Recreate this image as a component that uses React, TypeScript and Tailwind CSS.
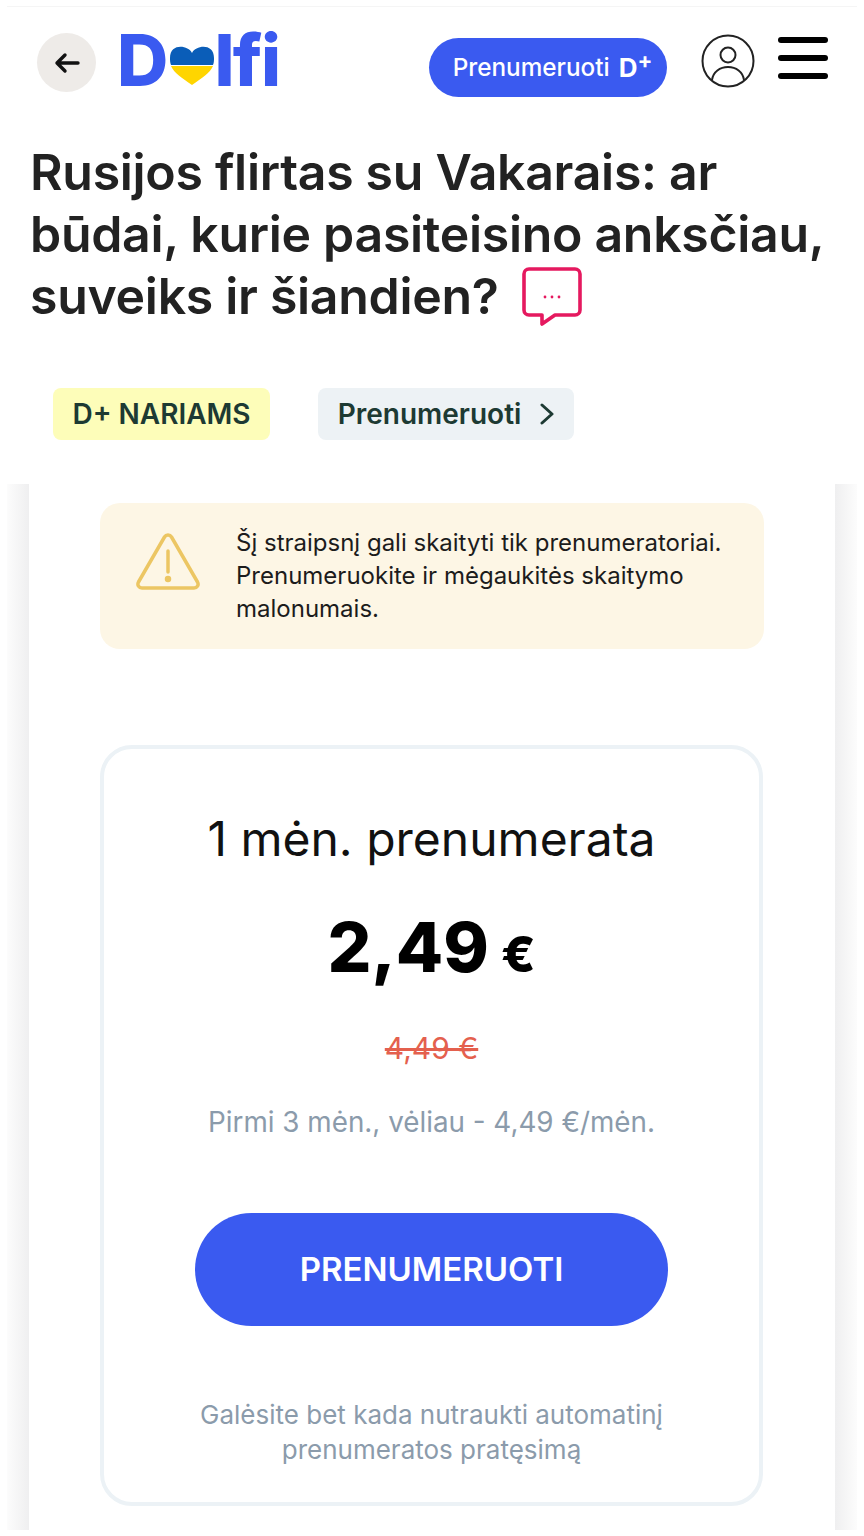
const font = { fontFamily: 'Inter, "Noto Sans", sans-serif' }

function Heart() {
  return (
    <svg viewBox="0 0 44 40" className="h-[40px] w-[44px] shrink-0">
      <path d="M22 8C18 0 0-2 0 13c0 2 0 5 1 7h42c1-2 1-5 1-7C44-2 26 0 22 8z" fill="#0a5db8" />
      <path d="M1 21h42c-3 7-11 12-21 19C12 33 4 28 1 21z" fill="#ffd500" />
    </svg>
  )
}

function UserIcon() {
  return (
    <svg viewBox="0 0 54 54" className="h-[54px] w-[54px]" fill="none" stroke="#222" strokeWidth="2">
      <circle cx="27" cy="27" r="25.500" />
      <circle cx="27" cy="21" r="7.500" />
      <path d="M11 46c1-8 8-13 16-13s15 5 16 13" />
    </svg>
  )
}

function ChatIcon() {
  return (
    <svg viewBox="0 0 60 60" className="h-[60px] w-[60px]" fill="none">
      <path
        d="M7 2h46a5 5 0 0 1 5 5v36a5 5 0 0 1-5 5H33L20 57v-9H7a5 5 0 0 1-5-5V7a5 5 0 0 1 5-5z"
        stroke="#e5195f"
        strokeWidth="3.600"
        strokeLinejoin="round"
      />
      <circle cx="23" cy="30" r="1.400" fill="#e5195f" />
      <circle cx="30" cy="30" r="1.400" fill="#e5195f" />
      <circle cx="37" cy="30" r="1.400" fill="#e5195f" />
    </svg>
  )
}

function WarningIcon() {
  return (
    <svg viewBox="0 0 64 58" className="mb-[28px] h-[58px] w-[64px] shrink-0" fill="none" stroke="#ecc663" strokeWidth="3.500" strokeLinecap="round" strokeLinejoin="round">
      <path d="M28.500 4 2.500 49c-1.600 3 .4 6 3.500 6h52c3.100 0 5.100-3 3.500-6L35.500 4c-1.600-2.700-5.400-2.700-7 0z" />
      <path d="M32 18v21" />
      <circle cx="32" cy="46" r="1.500" fill="#ecc663" />
    </svg>
  )
}

export default function App() {
  return (
    <div className="flex h-[1536px] w-[864px] flex-col overflow-hidden bg-white" style={font}>
      <div className="mx-[7px] mt-[6px] h-[1px] bg-[#f5f5f5]" />

      {/* header */}
      <header className="flex h-[113px] items-center pl-[37px] pr-[36px]">
        <button className="mb-[2px] flex h-[59px] w-[59px] shrink-0 items-center justify-center rounded-full bg-[#eeebe8]">
          <svg viewBox="0 0 26 22" className="h-[22px] w-[26px]" fill="none" stroke="#111" strokeWidth="3.400" strokeLinecap="round" strokeLinejoin="round">
            <path d="M24 11H3M11 3l-8 8 8 8" />
          </svg>
        </button>
        <div className="mb-[8px] ml-[21px] flex h-[60px] items-end text-[71px] font-extrabold leading-[60px] tracking-[-1.800px] text-[#3a5af0]">
          <span>D</span>
          <span className="mb-[5px] ml-[3px] mr-[1px]">
            <Heart />
          </span>
          <span>lfi</span>
        </div>
        <button className="ml-auto mt-[8px] flex h-[59px] w-[238px] translate-x-[2px] items-center justify-center rounded-full bg-[#3a5af0] pl-[9px] text-[24.300px] font-medium text-white">
          Prenumeruoti
          <span className="ml-[9px] text-[26px] font-bold">D</span>
          <span className="mb-[16px] text-[22px] font-bold leading-none">+</span>
        </button>
        <div className="ml-[36px] mt-[-5px]">
          <UserIcon />
        </div>
        <div className="ml-[23px] mt-[-11px] flex w-[50px] flex-col gap-[12px]">
          <div className="h-[6px] rounded-full bg-black" />
          <div className="h-[6px] rounded-full bg-black" />
          <div className="h-[6px] rounded-full bg-black" />
        </div>
      </header>

      {/* title */}
      <h1 className="ml-[30px] mt-[21px] w-[815px] text-[50px] font-semibold leading-[62px] tracking-[-0.300px] text-[#222]">
        Rusijos flirtas su Vakarais: ar būdai, kurie pasiteisino anksčiau, suveiks ir šiandien?
        <span className="ml-[23px] inline-block align-[-13px]">
          <ChatIcon />
        </span>
      </h1>

      {/* tags */}
      <div className="ml-[53px] mt-[61px] flex gap-[48px] text-[28px] font-semibold text-[#1d3a33]">
        <div className="flex h-[52px] w-[217px] items-center justify-center rounded-lg bg-[#fdfdb9]">D+ NARIAMS</div>
        <div className="flex h-[52px] w-[256px] items-center justify-center gap-[19px] rounded-lg bg-[#edf2f5]">
          Prenumeruoti
          <svg viewBox="0 0 14 22" className="h-[22px] w-[14px]" fill="none" stroke="#1d3a33" strokeWidth="3" strokeLinecap="round" strokeLinejoin="round">
            <path d="M2 2l10 9-10 9" />
          </svg>
        </div>
      </div>

      {/* paywall */}
      <div className="mx-[7px] mt-[44px] flex h-[1046px]">
        <div className="w-[22px] bg-gradient-to-r from-[#fcfcfc] to-[#efeff0]" />
        <div className="w-[806px] bg-white px-[71px] pt-[19px]">
          <div className="flex h-[146px] w-[664px] items-center rounded-[20px] bg-[#fdf6e5] pl-[36px] pr-[30px]">
            <WarningIcon />
            <p className="ml-[36px] mt-[-2px] text-[24px] leading-[33px] text-[#1c1c1c]">
              Šį straipsnį gali skaityti tik prenumeratoriai. Prenumeruokite ir mėgaukitės skaitymo malonumais.
            </p>
          </div>

          <div className="mt-[96px] flex h-[761px] w-[663px] flex-col items-center rounded-[32px] border-[4px] border-[#ecf2f6] pt-[55px]">
            <div className="text-[48px] leading-[70px] text-[#111]">1 mėn. prenumerata</div>
            <div className="mt-[29px] flex items-baseline font-extrabold leading-[88px] text-black">
              <span className="text-[69px]">2,49</span>
              <span className="ml-[12px] text-[50px]">€</span>
            </div>
            <div className="mt-[28px] text-[30px] leading-[44px] text-[#e4604e] line-through">4,49 €</div>
            <div className="mt-[30px] text-[27.800px] leading-[44px] text-[#8b9bab]">Pirmi 3 mėn., vėliau - 4,49 €/mėn.</div>
            <button className="mt-[69px] h-[113px] w-[473px] rounded-full bg-[#3a5af0] text-[33px] font-semibold text-white">
              PRENUMERUOTI
            </button>
            <p className="mt-[71px] w-[500px] text-center text-[26px] leading-[35px] text-[#8b9bab]">
              Galėsite bet kada nutraukti automatinį prenumeratos pratęsimą
            </p>
          </div>
        </div>
        <div className="w-[22px] bg-gradient-to-r from-[#efeff0] to-[#fcfcfc]" />
      </div>
    </div>
  )
}
